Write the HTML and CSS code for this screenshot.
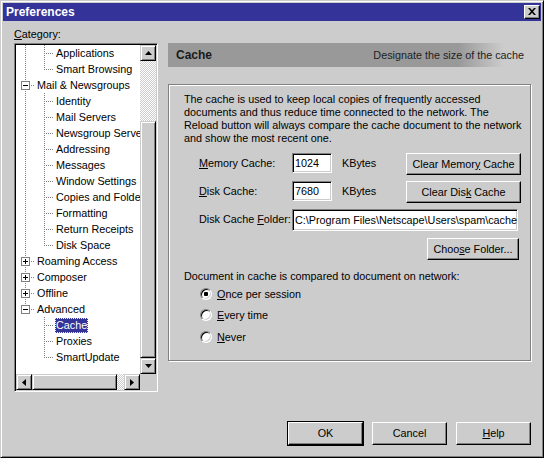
FILE: index.html
```html
<!DOCTYPE html>
<html>
<head>
<meta charset="utf-8">
<title>Preferences</title>
<link rel="stylesheet" href="styles.css">
</head>
<body>
<div class="window">
  <div class="titlebar">
    <span class="title">Preferences</span>
    <button class="close-btn" aria-label="Close">
      <svg width="8" height="7" viewBox="0 0 8 7"><path d="M0 0h2l2 2.3L6 0h2L5 3.5 8 7H6L4 4.7 2 7H0l3-3.5z" fill="#000"/></svg>
    </button>
  </div>

  <div class="client">
    <div class="cat-label"><u>C</u>ategory:</div>
    <div class="right-spacer"></div>

    <div class="listbox">
      <div class="tree">
        <div class="row"><span class="c pipe"></span><span class="c tee"></span><span class="lbl">Applications</span></div>
        <div class="row"><span class="c pipe"></span><span class="c elbow"></span><span class="lbl">Smart Browsing</span></div>
        <div class="row"><span class="c tee"><span class="box minus"></span></span><span class="lbl">Mail &amp; Newsgroups</span></div>
        <div class="row"><span class="c pipe"></span><span class="c tee"></span><span class="lbl">Identity</span></div>
        <div class="row"><span class="c pipe"></span><span class="c tee"></span><span class="lbl">Mail Servers</span></div>
        <div class="row"><span class="c pipe"></span><span class="c tee"></span><span class="lbl">Newsgroup Servers</span></div>
        <div class="row"><span class="c pipe"></span><span class="c tee"></span><span class="lbl">Addressing</span></div>
        <div class="row"><span class="c pipe"></span><span class="c tee"></span><span class="lbl">Messages</span></div>
        <div class="row"><span class="c pipe"></span><span class="c tee"></span><span class="lbl">Window Settings</span></div>
        <div class="row"><span class="c pipe"></span><span class="c tee"></span><span class="lbl">Copies and Folders</span></div>
        <div class="row"><span class="c pipe"></span><span class="c tee"></span><span class="lbl">Formatting</span></div>
        <div class="row"><span class="c pipe"></span><span class="c tee"></span><span class="lbl">Return Receipts</span></div>
        <div class="row"><span class="c pipe"></span><span class="c elbow"></span><span class="lbl">Disk Space</span></div>
        <div class="row"><span class="c tee"><span class="box plus"></span></span><span class="lbl">Roaming Access</span></div>
        <div class="row"><span class="c tee"><span class="box plus"></span></span><span class="lbl">Composer</span></div>
        <div class="row"><span class="c tee"><span class="box plus"></span></span><span class="lbl">Offline</span></div>
        <div class="row"><span class="c elbow"><span class="box minus"></span></span><span class="lbl">Advanced</span></div>
        <div class="row"><span class="c"></span><span class="c tee"></span><span class="lbl selected">Cache</span></div>
        <div class="row"><span class="c"></span><span class="c tee"></span><span class="lbl">Proxies</span></div>
        <div class="row"><span class="c"></span><span class="c elbow"></span><span class="lbl">SmartUpdate</span></div>
      </div>

      <div class="vscroll">
        <div class="sbtn"><svg width="7" height="4" viewBox="0 0 7 4"><path d="M3.5 0L7 4H0z" fill="#000"/></svg></div>
        <div class="track v-track-top"></div>
        <div class="thumb v-thumb"></div>
        <div class="sbtn"><svg width="7" height="4" viewBox="0 0 7 4"><path d="M0 0h7L3.5 4z" fill="#000"/></svg></div>
      </div>

      <div class="hscroll">
        <div class="sbtn"><svg width="4" height="7" viewBox="0 0 4 7"><path d="M4 0v7L0 3.5z" fill="#000"/></svg></div>
        <div class="thumb h-thumb"></div>
        <div class="track h-track"></div>
        <div class="sbtn"><svg width="4" height="7" viewBox="0 0 4 7"><path d="M0 0l4 3.5L0 7z" fill="#000"/></svg></div>
      </div>

      <div class="corner"></div>
    </div>

    <div class="panel">
      <div class="panel-head">
        <span class="head-title">Cache</span>
        <span class="head-desc">Designate the size of the cache</span>
      </div>

      <div class="frame">
        <p class="intro">The cache is used to keep local copies of frequently accessed<br>documents and thus reduce time connected to the network. The<br>Reload button will always compare the cache document to the network<br>and show the most recent one.</p>

        <div class="field-row first">
          <span class="field-label"><u>M</u>emory Cache:</span>
          <span class="input small">1024</span>
          <span class="unit">KBytes</span>
          <button class="btn wide">Clear Memor<u>y</u> Cache</button>
        </div>

        <div class="field-row">
          <span class="field-label"><u>D</u>isk Cache:</span>
          <span class="input small">7680</span>
          <span class="unit">KBytes</span>
          <button class="btn wide">Clear Dis<u>k</u> Cache</button>
        </div>

        <div class="field-row">
          <span class="field-label">Disk Cache <u>F</u>older:</span>
          <span class="input path">C:\Program Files\Netscape\Users\spam\cache</span>
        </div>

        <div class="choose-row">
          <button class="btn choose">Choo<u>s</u>e Folder...</button>
        </div>

        <div class="compare-label">Document in cache is compared to document on network:</div>

        <div class="radio-row"><span class="radio checked"></span><span><u>O</u>nce per session</span></div>
        <div class="radio-row"><span class="radio"></span><span><u>E</u>very time</span></div>
        <div class="radio-row"><span class="radio"></span><span><u>N</u>ever</span></div>
      </div>
    </div>

    <div class="footer">
      <button class="btn dlg default">OK</button>
      <button class="btn dlg">Cancel</button>
      <button class="btn dlg"><u>H</u>elp</button>
    </div>
  </div>
</div>
</body>
</html>
```

FILE: styles.css
```css
:root {
  --face: #cccccc;
  --shadow: #808080;
  --hilite: #ffffff;
  --dark: #000000;
  --accent: #333399;
  --vdots: repeating-linear-gradient(to bottom, #808080 0 1px, transparent 1px 2px);
  --hdots: repeating-linear-gradient(to right, #808080 0 1px, transparent 1px 2px);
  --dither: repeating-conic-gradient(#ffffff 0 25%, #cccccc 0 50%) 0 0 / 2px 2px;
}

* { box-sizing: border-box; }

html, body {
  margin: 0;
  padding: 0;
  background: var(--face);
}

body {
  font-family: "Liberation Sans", Arial, sans-serif;
  font-size: 10.8px;
  color: #000;
}

u { text-decoration: underline; text-underline-offset: 1px; }

button {
  font: inherit;
  color: inherit;
  margin: 0;
  padding: 0;
}

/* ---------- window frame ---------- */
.window {
  width: 544px;
  height: 458px;
  background: var(--face);
  border: 1px solid;
  border-color: var(--face) var(--dark) var(--dark) var(--face);
  box-shadow: inset 1px 1px 0 var(--hilite), inset -1px -1px 0 var(--shadow);
  padding: 2px;
}

.titlebar {
  height: 18px;
  background: var(--accent);
  display: flex;
  align-items: center;
  justify-content: space-between;
  padding: 0 1px 0 3px;
}

.title {
  color: #fff;
  font-weight: bold;
  font-size: 12px;
  line-height: 18px;
}

.close-btn {
  width: 16px;
  height: 14px;
  display: flex;
  align-items: center;
  justify-content: center;
  background: var(--face);
  border: 1px solid;
  border-color: var(--hilite) var(--dark) var(--dark) var(--hilite);
  box-shadow: inset -1px -1px 0 var(--shadow);
  padding: 0 1px 1px 0;
}

/* ---------- client area ---------- */
.client {
  display: grid;
  grid-template-columns: 144px 363px;
  grid-template-rows: 16px 349px auto;
  column-gap: 10px;
  padding: 6px 0 0 11px;
}

.cat-label {
  line-height: 13px;
  padding-top: 1px;
}

/* ---------- tree list ---------- */
.listbox {
  display: grid;
  grid-template-columns: 124px 16px;
  grid-template-rows: 329px 16px;
  border: 1px solid;
  border-color: var(--shadow) var(--hilite) var(--hilite) var(--shadow);
  box-shadow: inset 1px 1px 0 var(--dark), inset -1px -1px 0 var(--face);
  padding: 1px;
  background: #fff;
}

.tree {
  overflow: hidden;
  background: #fff;
}

.row {
  display: flex;
  align-items: center;
  height: 16px;
  white-space: nowrap;
}

.c {
  flex: none;
  width: 19px;
  height: 16px;
  display: flex;
  align-items: center;
}

.pipe {
  background: var(--vdots) 9px 0 / 1px 16px no-repeat;
}

.tee {
  background:
    var(--vdots) 9px 0 / 1px 16px no-repeat,
    var(--hdots) 11px 8px / 8px 1px no-repeat;
}

.elbow {
  background:
    var(--vdots) 9px 0 / 1px 9px no-repeat,
    var(--hdots) 11px 8px / 8px 1px no-repeat;
}

.box {
  width: 9px;
  height: 9px;
  margin: 1px 0 0 5px;
  border: 1px solid var(--shadow);
  background: #fff;
}

.box.minus {
  background:
    linear-gradient(#000, #000) 1px 3px / 5px 1px no-repeat,
    #fff;
}

.box.plus {
  background:
    linear-gradient(#000, #000) 1px 3px / 5px 1px no-repeat,
    linear-gradient(#000, #000) 3px 1px / 1px 5px no-repeat,
    #fff;
}

.lbl {
  margin-left: 1px;
  padding: 0 1px;
  line-height: 15px;
  height: 15px;
}

.lbl.selected {
  background: var(--accent);
  color: #fff;
  outline: 1px dotted #ffff66;
  outline-offset: -1px;
}

/* ---------- scrollbars ---------- */
.vscroll {
  display: flex;
  flex-direction: column;
}

.hscroll {
  display: flex;
}

.sbtn, .thumb {
  flex: none;
  width: 16px;
  height: 16px;
  display: flex;
  align-items: center;
  justify-content: center;
  background: var(--face);
  border: 1px solid;
  border-color: var(--face) var(--dark) var(--dark) var(--face);
  box-shadow: inset 1px 1px 0 var(--hilite), inset -1px -1px 0 var(--shadow);
}

.track { background: var(--dither); flex: none; }

.v-track-top { height: 60px; }
.v-thumb { height: 237px; }
.h-thumb { width: 85px; }
.h-track { width: 7px; }

.corner { background: var(--face); }

/* ---------- right panel ---------- */
.panel {
  grid-column: 2;
  grid-row: 2;
}

.panel-head {
  height: 24px;
  display: flex;
  align-items: center;
  justify-content: space-between;
  padding: 0 7px 0 8px;
  background: linear-gradient(to right, #999999 0, #999999 290px, #cccccc 336px);
}

.head-title {
  font-weight: bold;
  font-size: 12px;
  color: #1a1a1a;
}

.head-desc { color: #222; }

.frame {
  margin-top: 17px;
  height: 277px;
  border: 1px solid var(--shadow);
  box-shadow: 1px 1px 0 var(--hilite), inset 1px 1px 0 var(--hilite);
  padding: 8px 9px 0 15px;
}

.intro {
  margin: 0;
  line-height: 13px;
  white-space: nowrap;
}

.field-row {
  display: flex;
  align-items: flex-start;
  height: 22px;
  margin: 6px 0 0 15px;
}

.field-row.first { margin-top: 8px; }

.field-label {
  width: 93px;
  flex: none;
  line-height: 21px;
  white-space: nowrap;
}

.input {
  flex: none;
  height: 20px;
  background: #fff;
  border: 1px solid;
  border-color: var(--shadow) var(--hilite) var(--hilite) var(--shadow);
  box-shadow: inset 1px 1px 0 var(--dark), inset -1px -1px 0 var(--face);
  padding: 0 2px;
  line-height: 18px;
  white-space: nowrap;
  overflow: hidden;
}

.input.small { width: 40px; }
.input.path { width: 226px; height: 22px; line-height: 20px; }

.unit {
  margin-left: 10px;
  line-height: 21px;
}

.btn {
  background: var(--face);
  border: 1px solid;
  border-color: var(--hilite) var(--dark) var(--dark) var(--hilite);
  box-shadow: inset -1px -1px 0 var(--shadow);
  text-align: center;
  padding-bottom: 1px;
}

.btn.wide {
  width: 115px;
  height: 22px;
  margin-left: auto;
}

.choose-row {
  display: flex;
  justify-content: flex-end;
  margin: 7px 2px 0 0;
}

.btn.choose {
  width: 92px;
  height: 22px;
}

.compare-label {
  margin-top: 10px;
  line-height: 13px;
}

.radio-row {
  display: flex;
  align-items: center;
  height: 21.5px;
  margin-left: 16px;
  gap: 5px;
}

.radio-row:first-of-type { margin-top: 1px; }

.radio {
  width: 12px;
  height: 12px;
  border-radius: 50%;
  background: #fff;
  border: 1px solid;
  border-color: var(--shadow) var(--hilite) var(--hilite) var(--shadow);
  box-shadow: inset 1px 1px 0 var(--dark), inset -1px -1px 0 var(--face);
}

.radio.checked {
  background: radial-gradient(circle at 50% 50%, #000 0 2px, #fff 2.5px);
}

/* ---------- dialog buttons ---------- */
.footer {
  grid-column: 1 / span 2;
  grid-row: 3;
  display: flex;
  justify-content: flex-end;
  gap: 9px;
  margin-top: 30px;
  padding-right: 0;
}

.btn.dlg {
  width: 75px;
  height: 23px;
}

.btn.default {
  outline: 1px solid #000;
  border-color: var(--hilite) var(--dark) var(--dark) var(--hilite);
}
```
